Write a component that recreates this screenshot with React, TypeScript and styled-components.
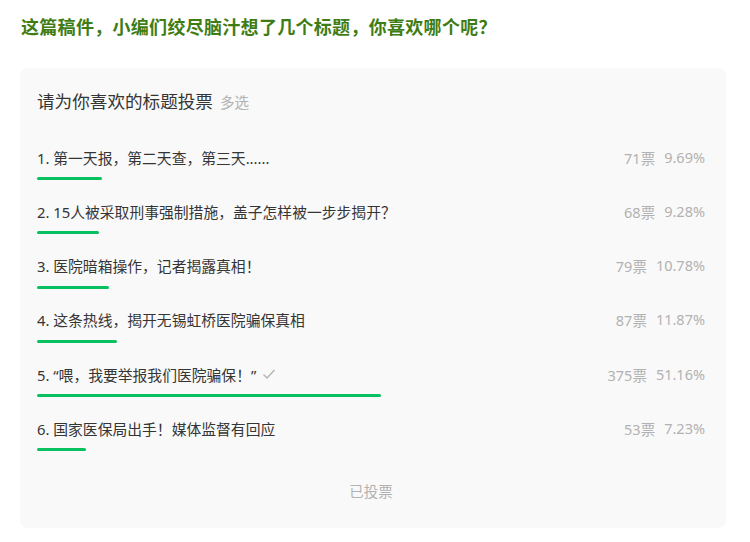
import React from 'react';
import styled, { createGlobalStyle } from 'styled-components';

const GlobalStyle = createGlobalStyle`
  body {
    margin: 0;
    background: #ffffff;
    font-family: "Noto Sans", "Noto Sans CJK SC", sans-serif;
  }
`;

const Page = styled.div`
  width: 750px;
  height: 542px;
  padding: 13px 24px 0 20px;
  box-sizing: border-box;
`;

const Heading = styled.h2`
  margin: 0 0 29px 1px;
  font-family: "Noto Sans CJK SC", sans-serif;
  font-size: 18px;
  line-height: 26px;
  letter-spacing: 0.3px;
  font-weight: 700;
  color: #3f7d14;
`;

const Card = styled.div`
  background: #f9f9f9;
  border-radius: 8px;
  padding: 21px 21px 27px 17px;
  display: flex;
  flex-direction: column;
`;

const Title = styled.div`
  display: flex;
  align-items: baseline;
  gap: 7px;
  margin-bottom: 32px;
  font-size: 17.6px;
  line-height: 24px;
  color: #353535;
`;

const Tag = styled.span`
  font-size: 14.5px;
  color: #b2b2b2;
`;

const Option = styled.div`
  display: flex;
  flex-direction: column;
  height: 54.3px;
`;

const OptionLine = styled.div`
  display: flex;
  justify-content: space-between;
  align-items: center;
  height: 22px;
  font-size: 14.8px;
  color: #353535;
`;

const Label = styled.div`
  display: flex;
  align-items: center;
  gap: 6px;
`;

const Stats = styled.div`
  display: flex;
  gap: 9px;
  font-size: 14.5px;
  color: #b2b2b2;
`;

const Track = styled.div`
  margin-top: 9px;
  width: 672px;
  height: 3px;
`;

const Bar = styled.div`
  height: 100%;
  background: #07c160;
  border-radius: 2px;
`;

const Voted = styled.div`
  margin-top: 9px;
  text-align: center;
  font-size: 14.5px;
  line-height: 20px;
  color: #b2b2b2;
`;

const Check = () => (
  <svg width="14" height="12" viewBox="0 0 14 12" fill="none">
    <path d="M1.5 6.5 L5 10 L12.5 2" stroke="#b2b2b2" strokeWidth="1.3" />
  </svg>
);

const options = [
  { text: '1. 第一天报，第二天查，第三天......', votes: 71, pct: 9.69 },
  { text: '2. 15人被采取刑事强制措施，盖子怎样被一步步揭开？', votes: 68, pct: 9.28 },
  { text: '3. 医院暗箱操作，记者揭露真相！', votes: 79, pct: 10.78 },
  { text: '4. 这条热线，揭开无锡虹桥医院骗保真相', votes: 87, pct: 11.87 },
  { text: '5. “喂，我要举报我们医院骗保！”', votes: 375, pct: 51.16, mine: true },
  { text: '6. 国家医保局出手！媒体监督有回应', votes: 53, pct: 7.23 },
];

export default function App() {
  return (
    <Page>
      <GlobalStyle />
      <Heading>这篇稿件，小编们绞尽脑汁想了几个标题，你喜欢哪个呢？</Heading>
      <Card>
        <Title>
          请为你喜欢的标题投票<Tag>多选</Tag>
        </Title>
        {options.map(o => (
          <Option key={o.text}>
            <OptionLine>
              <Label>
                {o.text}
                {o.mine && <Check />}
              </Label>
              <Stats>
                <span>{o.votes}票</span>
                <span>{o.pct.toFixed(2)}%</span>
              </Stats>
            </OptionLine>
            <Track>
              <Bar style={{ width: `${o.pct}%` }} />
            </Track>
          </Option>
        ))}
        <Voted>已投票</Voted>
      </Card>
    </Page>
  );
}
